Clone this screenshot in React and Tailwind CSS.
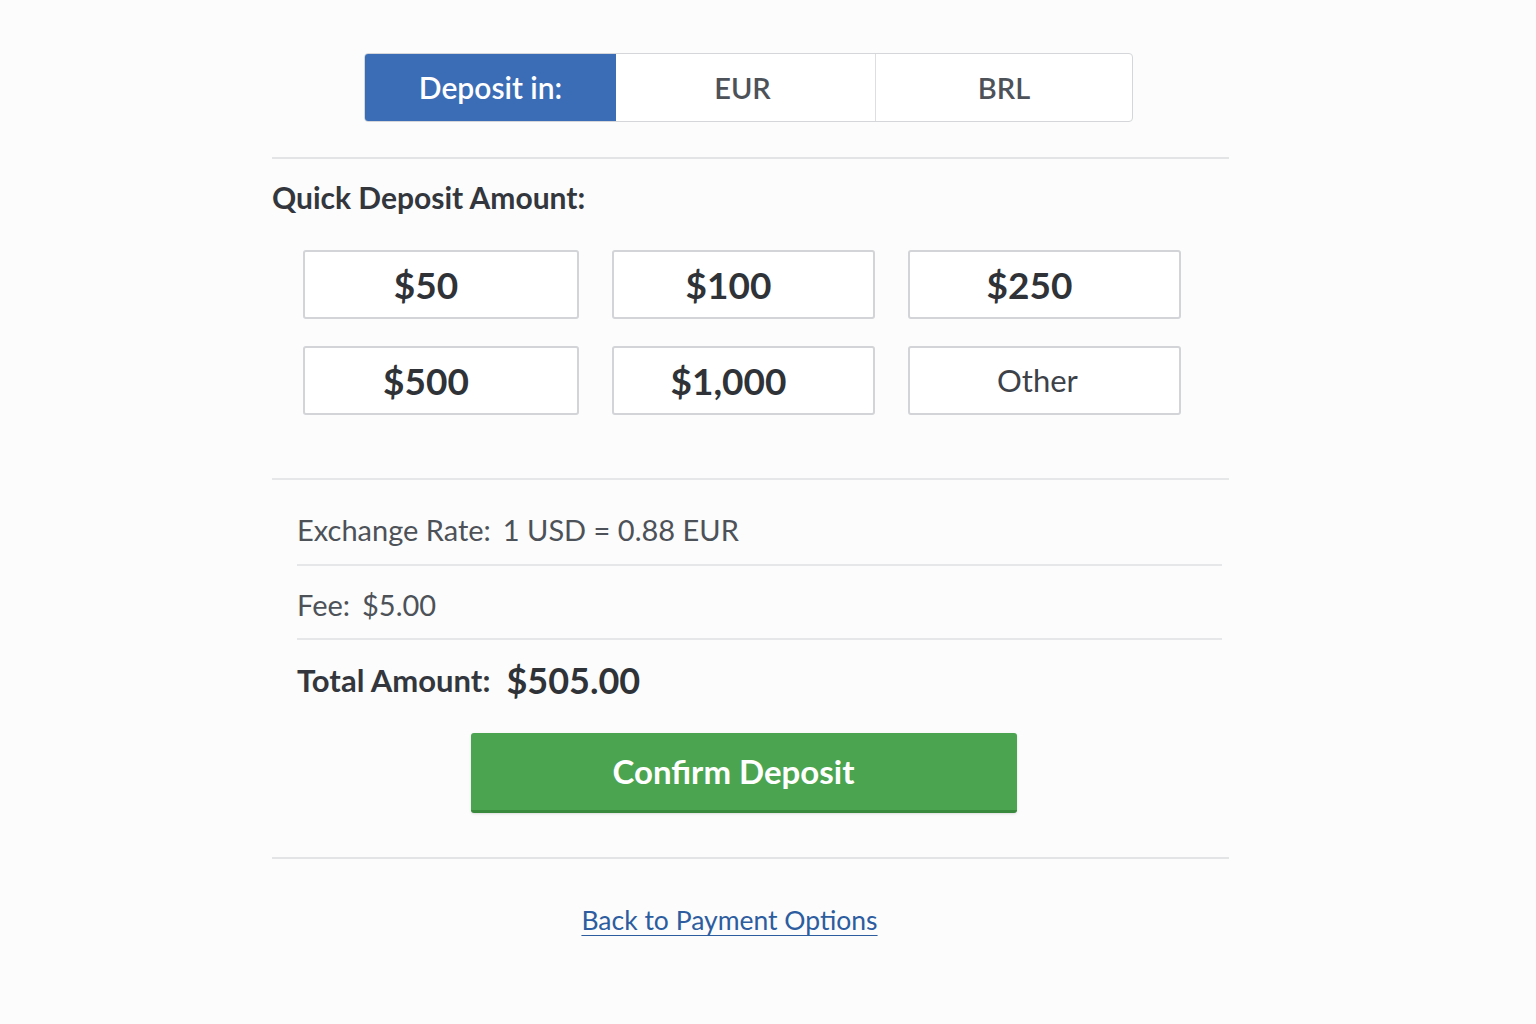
import { useState } from "react";

const amounts = ["$50", "$100", "$250", "$500", "$1,000"];

const App = () => {
    const [currency, setCurrency] = useState("EUR");
    const [amount, setAmount] = useState("$500");

    return (
        <div className="min-h-[1024px] w-full bg-[#fcfcfc] text-[#33373d]" style={{ fontFamily: "Lato, 'Open Sans', sans-serif" }}>
            <div className="ml-[272px] w-[957px] pt-[53px]">
                {/* currency switch */}
                <div className="ml-[92px] flex h-[69px] w-[769px] overflow-hidden rounded-[4px] border border-[#d4d6d9] bg-white">
                    <div className="flex w-[251px] items-center justify-center bg-[#3b6db6] text-[30px] font-semibold text-white">
                        Deposit in:
                    </div>
                    <button onClick={() => setCurrency("EUR")} className="flex w-[260px] items-center justify-center border-r border-[#dcdee1] pr-[6px] text-[29px] font-semibold text-[#4d5259]">
                        EUR
                    </button>
                    <button onClick={() => setCurrency("BRL")} className="flex flex-1 items-center justify-center text-[29px] font-semibold text-[#4d5259]">
                        BRL
                    </button>
                </div>

                <div className="mt-[35px] border-t-2 border-[#e3e4e6]"></div>

                <p className="mt-[19px] text-[30px] font-bold leading-[38px] text-[#33373d]">Quick Deposit Amount:</p>

                <div className="ml-[31px] mt-[34px] grid w-[878px] grid-cols-[276px_263px_273px] gap-x-[33px] gap-y-[27px]">
                    {amounts.map((a) => (
                        <button key={a} onClick={() => setAmount(a)} className="flex h-[69px] items-center justify-center rounded-[3px] border-2 border-[#d2d4d7] bg-white pr-[30px] text-[37px] font-bold text-[#2f3338]">
                            {a}
                        </button>
                    ))}
                    <button className="flex h-[69px] items-center justify-center rounded-[3px] border-2 border-[#d2d4d7] bg-white pr-[14px] text-[31px] font-normal text-[#3d4148]">
                        Other
                    </button>
                </div>

                <div className="mt-[63px] border-t-2 border-[#e6e7e9]"></div>

                <div className="ml-[25px] mr-[7px]">
                    <div className="flex h-[86px] items-center border-b-2 border-[#e6e7e9] pt-[16px] text-[29px] text-[#4d5259]">
                        <span>Exchange Rate:</span>
                        <span className="ml-[12px]">1 USD = 0.88 EUR</span>
                    </div>
                    <div className="flex h-[74px] items-center border-b-2 border-[#e6e7e9] pt-[6px] text-[29px] text-[#4d5259]">
                        <span>Fee:</span>
                        <span className="ml-[12px]">$5.00</span>
                    </div>
                    <div className="flex h-[78px] items-center pt-[2px]">
                        <span className="text-[31px] font-bold text-[#33373d]">Total Amount:</span>
                        <span className="ml-[16px] text-[36px] font-bold text-[#2f3338]">$505.00</span>
                    </div>
                </div>

                <div className="mt-[15px] flex justify-center pr-[14px]">
                    <button className="flex h-[80px] w-[546px] items-center justify-center rounded-[3px] border-b-[3px] border-[#3a8a3e] bg-[#4ba44f] pr-[20px] text-[33px] font-bold text-white shadow-sm">
                        Confirm Deposit
                    </button>
                </div>

                <div className="mt-[44px] border-t-2 border-[#e3e4e6]"></div>

                <div className="mt-[42px] flex justify-center pr-[42px]">
                    <a href="#" className="text-[26.5px] text-[#2d5d9f] underline decoration-1 underline-offset-[5px]">
                        Back to Payment Options
                    </a>
                </div>
            </div>
        </div>
    );
};

export default App;
